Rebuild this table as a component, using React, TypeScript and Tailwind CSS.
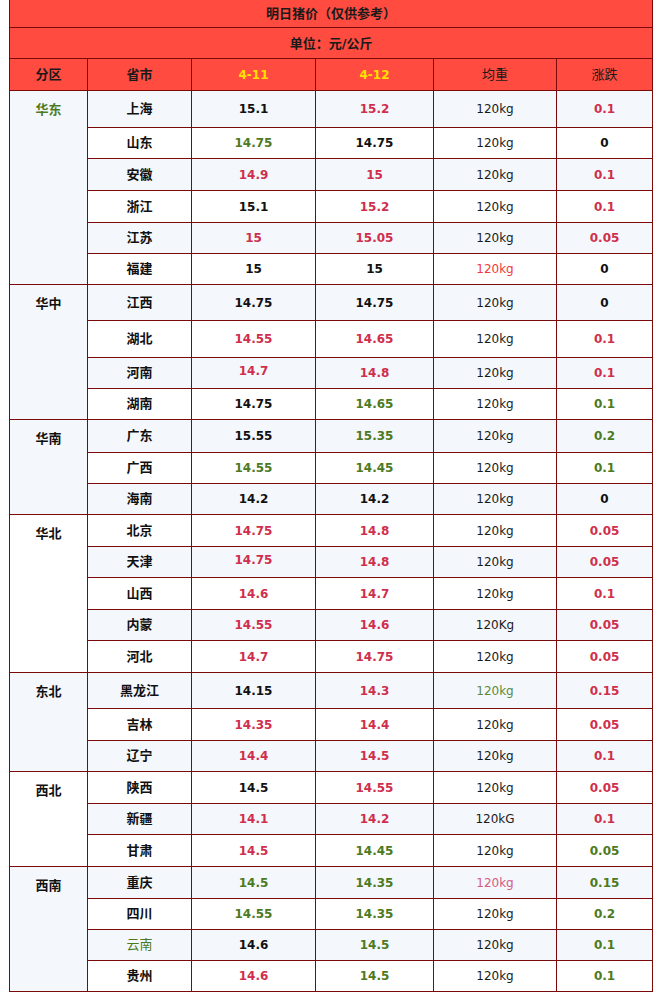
const K = 'text-[#111111] font-bold';
const G = 'text-[#4d7a1f] font-bold';
const R = 'text-[#cf2f4c] font-bold';

type Cell = [string, string];

interface Row {
  region?: string;
  span?: number;
  regionCls?: string;
  prov: string;
  provCls?: string;
  a: Cell;
  b: Cell;
  w?: string;
  wCls?: string;
  d: Cell;
  h: string;
  aTop?: boolean;
}

const ROWS: Row[] = [
  { region: '华东', span: 6, regionCls: 'text-[#4d7a1f]', prov: '上海', a: ['15.1', K], b: ['15.2', R], d: ['0.1', R], h: 'h-[37px]' },
  { prov: '山东', a: ['14.75', G], b: ['14.75', K], d: ['0', K], h: 'h-[31px]' },
  { prov: '安徽', a: ['14.9', R], b: ['15', R], d: ['0.1', R], h: 'h-[32px]' },
  { prov: '浙江', a: ['15.1', K], b: ['15.2', R], d: ['0.1', R], h: 'h-[32px]' },
  { prov: '江苏', a: ['15', R], b: ['15.05', R], d: ['0.05', R], h: 'h-[31px]' },
  { prov: '福建', a: ['15', K], b: ['15', K], wCls: 'text-[#ef3a3a]', d: ['0', K], h: 'h-[31px]' },
  { region: '华中', span: 4, prov: '江西', a: ['14.75', K], b: ['14.75', K], d: ['0', K], h: 'h-[36px]' },
  { prov: '湖北', a: ['14.55', R], b: ['14.65', R], d: ['0.1', R], h: 'h-[37px]' },
  { prov: '河南', a: ['14.7', R], b: ['14.8', R], d: ['0.1', R], h: 'h-[31px]', aTop: true },
  { prov: '湖南', a: ['14.75', K], b: ['14.65', G], d: ['0.1', G], h: 'h-[31px]' },
  { region: '华南', span: 3, prov: '广东', a: ['15.55', K], b: ['15.35', G], d: ['0.2', G], h: 'h-[33px]' },
  { prov: '广西', a: ['14.55', G], b: ['14.45', G], d: ['0.1', G], h: 'h-[31px]' },
  { prov: '海南', a: ['14.2', K], b: ['14.2', K], d: ['0', K], h: 'h-[31px]' },
  { region: '华北', span: 5, prov: '北京', a: ['14.75', R], b: ['14.8', R], d: ['0.05', R], h: 'h-[32px]' },
  { prov: '天津', a: ['14.75', R], b: ['14.8', R], d: ['0.05', R], h: 'h-[31px]', aTop: true },
  { prov: '山西', a: ['14.6', R], b: ['14.7', R], d: ['0.1', R], h: 'h-[32px]' },
  { prov: '内蒙', a: ['14.55', R], b: ['14.6', R], w: '120Kg', d: ['0.05', R], h: 'h-[31px]' },
  { prov: '河北', a: ['14.7', R], b: ['14.75', R], d: ['0.05', R], h: 'h-[32px]' },
  { region: '东北', span: 3, prov: '黑龙江', a: ['14.15', K], b: ['14.3', R], wCls: 'text-[#5a8a3a]', d: ['0.15', R], h: 'h-[36px]' },
  { prov: '吉林', a: ['14.35', R], b: ['14.4', R], d: ['0.05', R], h: 'h-[32px]' },
  { prov: '辽宁', a: ['14.4', R], b: ['14.5', R], d: ['0.1', R], h: 'h-[31px]' },
  { region: '西北', span: 3, prov: '陕西', a: ['14.5', K], b: ['14.55', R], d: ['0.05', R], h: 'h-[32px]' },
  { prov: '新疆', a: ['14.1', R], b: ['14.2', R], w: '120kG', d: ['0.1', R], h: 'h-[31px]' },
  { prov: '甘肃', a: ['14.5', R], b: ['14.45', G], d: ['0.05', G], h: 'h-[32px]' },
  { region: '西南', span: 4, prov: '重庆', a: ['14.5', G], b: ['14.35', G], wCls: 'text-[#d45a82]', d: ['0.15', G], h: 'h-[32px]' },
  { prov: '四川', a: ['14.55', G], b: ['14.35', G], d: ['0.2', G], h: 'h-[31px]' },
  { prov: '云南', provCls: 'text-[#4d7a1f] font-normal', a: ['14.6', K], b: ['14.5', G], d: ['0.1', G], h: 'h-[31px]' },
  { prov: '贵州', a: ['14.6', R], b: ['14.5', G], d: ['0.1', G], h: 'h-[31px]' },
];

const td = 'border border-[#7a0a0a] text-center p-0';
const cjk = 'text-[13px]';
const num = 'text-[12px]';

export default function App() {
  return (
    <div className="min-h-[996px] bg-white pl-[9px] font-['DejaVu_Sans','Noto_Sans_CJK_SC',sans-serif]">
      <table className="w-[643px] table-fixed border-collapse">
        <colgroup>
          <col className="w-[78px]" />
          <col className="w-[104px]" />
          <col className="w-[124px]" />
          <col className="w-[118px]" />
          <col className="w-[123px]" />
          <col className="w-[96px]" />
        </colgroup>
        <thead className="bg-[#ff4b40] text-[#1a1a1a]">
          <tr className="h-[27px]">
            <td colSpan={6} className={`${td} border-t-0 ${cjk} font-bold`}>明日猪价（仅供参考）</td>
          </tr>
          <tr className="h-[31px]">
            <td colSpan={6} className={`${td} ${cjk} font-bold pt-[3px]`}>单位：元/公斤</td>
          </tr>
          <tr className="h-[32px]">
            <td className={`${td} ${cjk} font-bold pt-[2px]`}>分区</td>
            <td className={`${td} ${cjk} font-bold pt-[2px]`}>省市</td>
            <td className={`${td} ${num} font-bold text-[#ffe000] pt-[2px]`}>4-11</td>
            <td className={`${td} ${num} font-bold text-[#ffe000] pt-[2px]`}>4-12</td>
            <td className={`${td} ${cjk} pt-[2px]`}>均重</td>
            <td className={`${td} ${cjk} pt-[2px]`}>涨跌</td>
          </tr>
        </thead>
        <tbody>
          {ROWS.map((r, i) => (
            <tr key={r.prov} className={`${r.h} ${i % 2 === 0 ? 'bg-[#f4f8fd]' : 'bg-white'}`}>
              {r.region && (
                <td rowSpan={r.span} className={`${td} ${cjk} align-top pt-[9px] font-bold ${r.regionCls ?? 'text-[#111111]'}`}>
                  {r.region}
                </td>
              )}
              <td className={`${td} ${cjk} pt-[1px] ${r.provCls ?? 'text-[#111111] font-bold'}`}>{r.prov}</td>
              <td className={`${td} ${num} ${r.a[1]} ${r.aTop ? 'align-top pt-[4px]' : 'pt-[1px]'}`}>{r.a[0]}</td>
              <td className={`${td} ${num} pt-[1px] ${r.b[1]}`}>{r.b[0]}</td>
              <td className={`${td} ${num} pt-[1px] ${r.wCls ?? 'text-[#1a1a1a]'}`}>{r.w ?? '120kg'}</td>
              <td className={`${td} ${num} pt-[1px] ${r.d[1]}`}>{r.d[0]}</td>
            </tr>
          ))}
        </tbody>
      </table>
    </div>
  );
}
